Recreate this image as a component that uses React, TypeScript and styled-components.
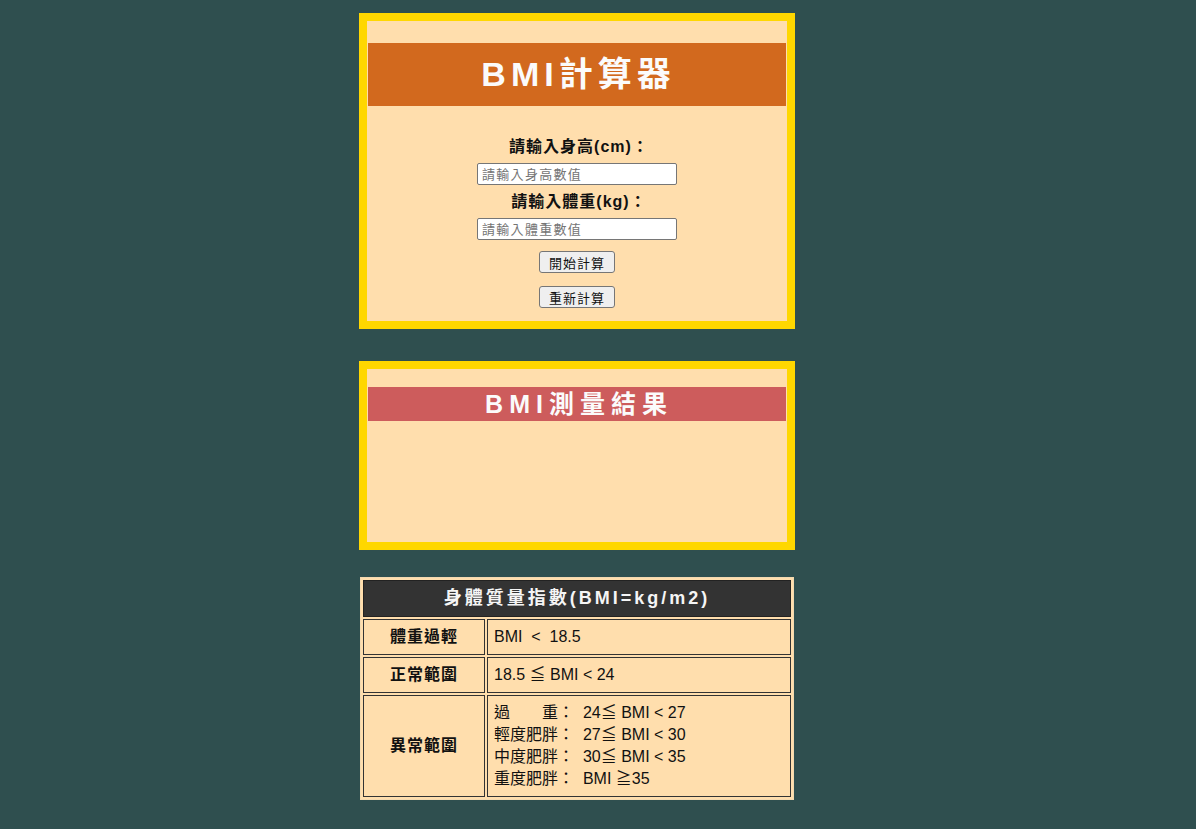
import React from "react";
import styled, { createGlobalStyle } from "styled-components";

const GlobalStyle = createGlobalStyle`
  html, body {
    margin: 0;
    padding: 0;
    background: #2f4f4f;
  }
  body {
    font-family: "Liberation Sans", Arial, "Noto Sans CJK TC", sans-serif;
    color: #111;
  }
`;

const Page = styled.div`
  display: flex;
  flex-direction: column;
  align-items: flex-start;
  padding: 13px 0 20px 359px;
`;

const Card = styled.section<{ $mb: number }>`
  width: 420px;
  border: 8px solid #ffd700;
  background: #ffdead;
  padding-top: 1px;
  margin-bottom: ${(p) => p.$mb}px;
  display: flex;
  flex-direction: column;
`;

const Banner = styled.h1<{ $bg: string; $size: number; $height: number; $mt: number; $spacing: number }>`
  margin: ${(p) => p.$mt}px 1px 0;
  height: ${(p) => p.$height}px;
  line-height: ${(p) => p.$height}px;
  background: ${(p) => p.$bg};
  color: #fbfbfb;
  font-size: ${(p) => p.$size}px;
  font-weight: bold;
  letter-spacing: ${(p) => p.$spacing}px;
  text-align: center;
  padding-left: ${(p) => p.$spacing - 2}px;
`;

const Form = styled.div`
  display: flex;
  flex-direction: column;
  align-items: center;
  padding: 31px 0 13px;
`;

const Label = styled.label`
  font-size: 16px;
  font-weight: bold;
  line-height: 20px;
  letter-spacing: 1px;
  color: #111;
  margin-bottom: 6px;
  padding-left: 4px;
`;

const Input = styled.input<{ $mb: number }>`
  box-sizing: border-box;
  width: 200px;
  height: 22px;
  margin: 0 0 ${(p) => p.$mb}px;
  padding: 1px 4px;
  border: 1px solid #767676;
  border-radius: 2px;
  background: #fff;
  font-family: "Liberation Sans", Arial, "Noto Sans CJK TC", sans-serif;
  font-size: 13px;
  letter-spacing: 1.3px;
  &::placeholder {
    color: #757575;
  }
`;

const Button = styled.button<{ $mb: number }>`
  box-sizing: border-box;
  width: 76px;
  height: 22px;
  margin: 0 0 ${(p) => p.$mb}px;
  padding: 0;
  border: 1px solid #767676;
  border-radius: 3px;
  background: #efefef;
  color: #111;
  font-family: "Liberation Sans", Arial, "Noto Sans CJK TC", sans-serif;
  font-size: 13px;
  letter-spacing: 1px;
`;

const ResultArea = styled.div`
  height: 121px;
`;

const Table = styled.table`
  width: 434px;
  margin-left: 1px;
  border: 1px solid #f3d9b0;
  border-spacing: 2px;
  background: #ffdead;
`;

const HeadCell = styled.th`
  height: 23px;
  padding: 6px;
  border: 1px solid #222;
  background: #333;
  color: #f5f5f5;
  font-size: 18px;
  line-height: 23px;
  letter-spacing: 3px;
  font-weight: bold;
  text-align: center;
`;

const NameCell = styled.td`
  width: 108px;
  padding: 6px;
  border: 1px solid #333;
  background: #ffdead;
  font-size: 16px;
  font-weight: bold;
  line-height: 22px;
  letter-spacing: 1px;
  text-align: center;
  vertical-align: middle;
  color: #111;
`;

const ValueCell = styled.td`
  padding: 6px;
  border: 1px solid #333;
  background: #ffdead;
  font-size: 16px;
  line-height: 22px;
  text-align: left;
  color: #111;
`;

const Line = styled.div`
  white-space: pre;
`;

export default function App() {
  return (
    <>
      <GlobalStyle />
      <Page>
        <Card $mb={32}>
          <Banner as="h1" $bg="#d2691e" $size={34} $height={63} $mt={21} $spacing={5}>
            BMI計算器
          </Banner>
          <Form>
            <Label htmlFor="h">請輸入身高(cm)：</Label>
            <Input id="h" $mb={7} placeholder="請輸入身高數值" />
            <Label htmlFor="w">請輸入體重(kg)：</Label>
            <Input id="w" $mb={11} placeholder="請輸入體重數值" />
            <Button $mb={13}>開始計算</Button>
            <Button $mb={0}>重新計算</Button>
          </Form>
        </Card>
        <Card $mb={27}>
          <Banner as="h2" $bg="#cd5c5c" $size={25} $height={34} $mt={17} $spacing={6}>
            BMI測量結果
          </Banner>
          <ResultArea />
        </Card>
        <Table>
          <tbody>
            <tr>
              <HeadCell colSpan={2}>身體質量指數(BMI=kg/m2)</HeadCell>
            </tr>
            <tr>
              <NameCell>體重過輕</NameCell>
              <ValueCell>BMI &nbsp;&lt; &nbsp;18.5</ValueCell>
            </tr>
            <tr>
              <NameCell>正常範圍</NameCell>
              <ValueCell>18.5 ≦ BMI &lt; 24</ValueCell>
            </tr>
            <tr>
              <NameCell>異常範圍</NameCell>
              <ValueCell>
                <Line>過　　重：  24≦ BMI &lt; 27</Line>
                <Line>輕度肥胖：  27≦ BMI &lt; 30</Line>
                <Line>中度肥胖：  30≦ BMI &lt; 35</Line>
                <Line>重度肥胖：  BMI ≧35</Line>
              </ValueCell>
            </tr>
          </tbody>
        </Table>
      </Page>
    </>
  );
}
